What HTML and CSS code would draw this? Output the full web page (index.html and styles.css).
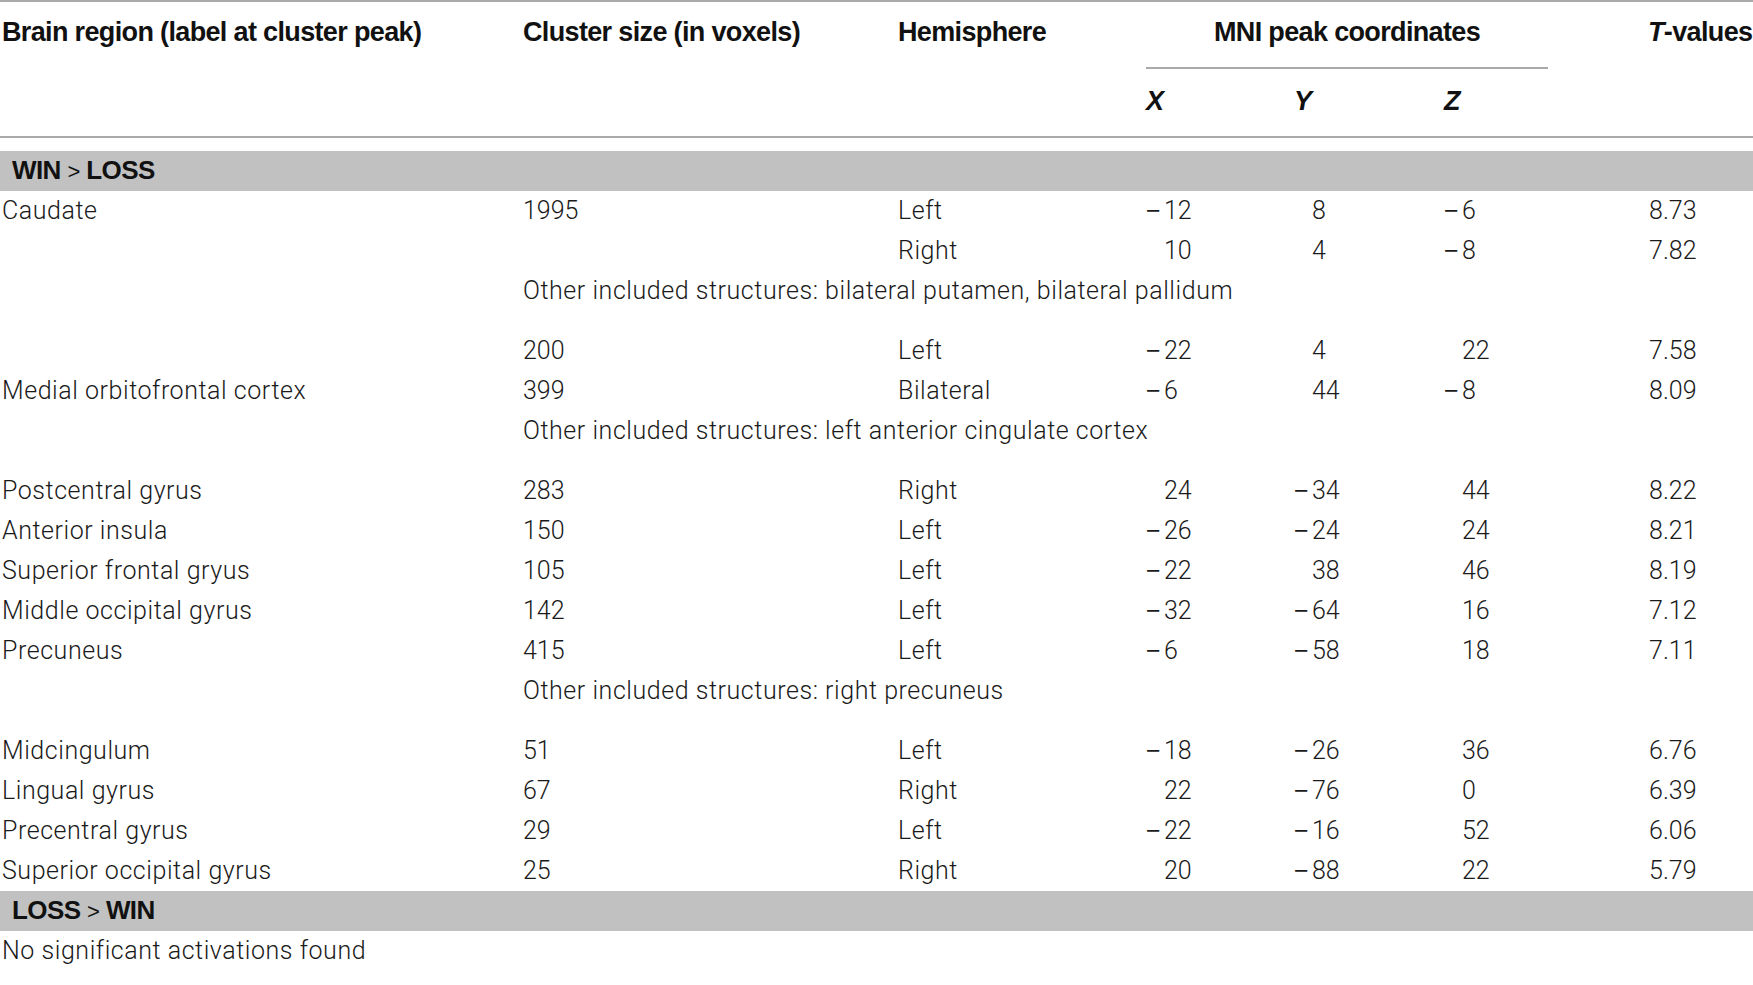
FILE: index.html
```html
<!DOCTYPE html>
<html lang="en">
<head>
<meta charset="utf-8">
<title>Brain regions — WIN vs LOSS</title>
<link rel="stylesheet" href="styles.css">
</head>
<body>
<table class="results">
  <colgroup>
    <col class="w-region">
    <col class="w-size">
    <col class="w-hemi">
    <col class="w-x">
    <col class="w-y">
    <col class="w-z">
    <col class="w-t">
  </colgroup>
  <thead>
    <tr class="head-top">
      <th rowspan="2" class="region">Brain region (label at cluster peak)</th>
      <th rowspan="2">Cluster size (in voxels)</th>
      <th rowspan="2">Hemisphere</th>
      <th colspan="3" class="mni">MNI peak coordinates</th>
      <th rowspan="2" class="tval"><i>T</i>-values</th>
    </tr>
    <tr class="head-axes">
      <th><i>X</i></th>
      <th><i>Y</i></th>
      <th><i>Z</i></th>
    </tr>
  </thead>
  <tbody>
    <tr class="band first"><td colspan="7">WIN <span class="gt">&gt;</span> LOSS</td></tr>
    <tr><td class="region">Caudate</td><td class="n">1995</td><td>Left</td><td class="c"><span class="m">−</span>12</td><td class="c">8</td><td class="c"><span class="m">−</span>6</td><td class="t">8.73</td></tr>
    <tr><td class="region"></td><td class="n"></td><td>Right</td><td class="c">10</td><td class="c">4</td><td class="c"><span class="m">−</span>8</td><td class="t">7.82</td></tr>
    <tr class="other"><td class="region"></td><td colspan="6">Other included structures: bilateral putamen, bilateral pallidum</td></tr>
    <tr><td class="region"></td><td class="n">200</td><td>Left</td><td class="c"><span class="m">−</span>22</td><td class="c">4</td><td class="c">22</td><td class="t">7.58</td></tr>
    <tr><td class="region">Medial orbitofrontal cortex</td><td class="n">399</td><td>Bilateral</td><td class="c"><span class="m">−</span>6</td><td class="c">44</td><td class="c"><span class="m">−</span>8</td><td class="t">8.09</td></tr>
    <tr class="other"><td class="region"></td><td colspan="6">Other included structures: left anterior cingulate cortex</td></tr>
    <tr><td class="region">Postcentral gyrus</td><td class="n">283</td><td>Right</td><td class="c">24</td><td class="c"><span class="m">−</span>34</td><td class="c">44</td><td class="t">8.22</td></tr>
    <tr><td class="region">Anterior insula</td><td class="n">150</td><td>Left</td><td class="c"><span class="m">−</span>26</td><td class="c"><span class="m">−</span>24</td><td class="c">24</td><td class="t">8.21</td></tr>
    <tr><td class="region">Superior frontal gryus</td><td class="n">105</td><td>Left</td><td class="c"><span class="m">−</span>22</td><td class="c">38</td><td class="c">46</td><td class="t">8.19</td></tr>
    <tr><td class="region">Middle occipital gyrus</td><td class="n">142</td><td>Left</td><td class="c"><span class="m">−</span>32</td><td class="c"><span class="m">−</span>64</td><td class="c">16</td><td class="t">7.12</td></tr>
    <tr><td class="region">Precuneus</td><td class="n">415</td><td>Left</td><td class="c"><span class="m">−</span>6</td><td class="c"><span class="m">−</span>58</td><td class="c">18</td><td class="t">7.11</td></tr>
    <tr class="other"><td class="region"></td><td colspan="6">Other included structures: right precuneus</td></tr>
    <tr><td class="region">Midcingulum</td><td class="n">51</td><td>Left</td><td class="c"><span class="m">−</span>18</td><td class="c"><span class="m">−</span>26</td><td class="c">36</td><td class="t">6.76</td></tr>
    <tr><td class="region">Lingual gyrus</td><td class="n">67</td><td>Right</td><td class="c">22</td><td class="c"><span class="m">−</span>76</td><td class="c">0</td><td class="t">6.39</td></tr>
    <tr><td class="region">Precentral gyrus</td><td class="n">29</td><td>Left</td><td class="c"><span class="m">−</span>22</td><td class="c"><span class="m">−</span>16</td><td class="c">52</td><td class="t">6.06</td></tr>
    <tr><td class="region">Superior occipital gyrus</td><td class="n">25</td><td>Right</td><td class="c">20</td><td class="c"><span class="m">−</span>88</td><td class="c">22</td><td class="t">5.79</td></tr>
    <tr class="band"><td colspan="7">LOSS <span class="gt">&gt;</span> WIN</td></tr>
    <tr class="last"><td colspan="7" class="region">No significant activations found</td></tr>
  </tbody>
</table>
</body>
</html>
```

FILE: styles.css
```css
html, body {
  margin: 0;
  padding: 0;
  background: #ffffff;
  overflow: hidden;
}

.results {
  width: 1753px;
  table-layout: fixed;
  border-collapse: separate;
  border-spacing: 0;
  border-top: 2px solid #a9a9a9;
  font-family: Roboto, "Liberation Sans", sans-serif;
  font-weight: 300;
  font-size: 25px;
  letter-spacing: 0.55px;
  color: #1a1a1a;
}

.w-region { width: 523px; }
.w-size { width: 375px; }
.w-hemi { width: 248px; }
.w-x { width: 148px; }
.w-y { width: 150px; }
.w-z { width: 104px; }
.w-t { width: 205px; }

th {
  font-family: "Liberation Sans", Arial, sans-serif;
  font-weight: 700;
  font-size: 27px;
  letter-spacing: -0.65px;
  color: #111111;
  text-align: left;
  vertical-align: top;
  line-height: 30px;
  padding: 15px 0 0 0;
  white-space: nowrap;
}

thead th[rowspan] {
  border-bottom: 2px solid #a9a9a9;
}

th.region, td.region {
  padding-left: 2px;
}

.head-top .mni {
  text-align: center;
  padding-bottom: 20px;
  border-bottom: 2px solid #a9a9a9;
}

.head-axes th {
  padding: 17px 0 20px 0;
  border-bottom: 2px solid #a9a9a9;
}

th.tval {
  padding-left: 100px;
}

td {
  height: 40px;
  line-height: 40px;
  padding: 0;
  vertical-align: top;
  white-space: nowrap;
  overflow: visible;
}

td.n,
td.c,
td.t {
  letter-spacing: 0;
}

td.c {
  padding-left: 18px;
}

.m {
  display: inline-block;
  width: 18px;
  margin-left: -18px;
  line-height: 10px;
  font-family: "Liberation Sans", Arial, sans-serif;
  font-weight: 400;
}

td.t {
  padding-left: 101px;
}

.other td {
  padding-bottom: 20px;
}

.band td {
  height: 39px;
  line-height: 39px;
  background: #c1c1c1;
  padding: 0 12px;
  font-family: "Liberation Sans", Arial, sans-serif;
  font-weight: 700;
  font-size: 26px;
  letter-spacing: -0.6px;
  color: #111111;
}

.band.first td {
  border-top: 13px solid #ffffff;
}

.band .gt {
  font-weight: 400;
  font-size: 22px;
}

.last td {
  padding-bottom: 14px;
  border-bottom: 2px solid #a9a9a9;
}
```
